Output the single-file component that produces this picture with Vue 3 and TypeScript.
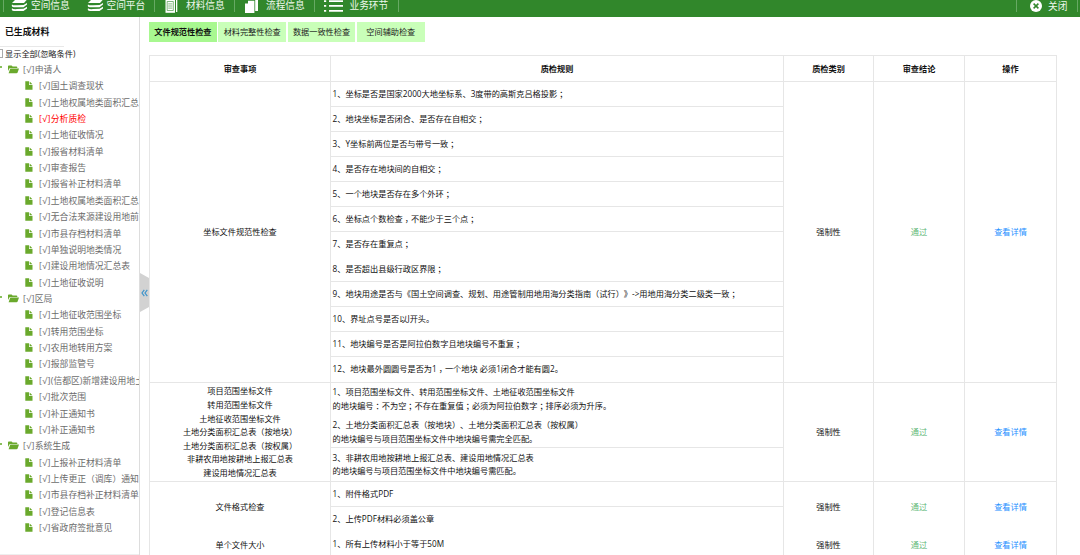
<script setup lang="ts">
interface NavItem { label: string; icon: 'layers' | 'book' | 'pages' | 'list'; width: number; gap: number; divider: boolean }
interface TreeGroup { name: string; items: string[] }
interface Rule { lines: string[]; line: boolean }
interface CheckGroup { names: string[]; rules: Rule[]; height: number; line: boolean }

const nav: NavItem[] = [
  { label: '空间信息', icon: 'layers', width: 75.5, gap: 0, divider: false },
  { label: '空间平台', icon: 'layers', width: 75.5, gap: 0, divider: true },
  { label: '材料信息', icon: 'book', width: 80, gap: 1, divider: true },
  { label: '流程信息', icon: 'pages', width: 80, gap: 1, divider: true },
  { label: '业务环节', icon: 'list', width: 84, gap: 5.5, divider: true },
]

const active = '分析质检'
const tree: TreeGroup[] = [
  {
    name: '申请人',
    items: ['国土调查现状', '土地权属地类面积汇总', '分析质检', '土地征收情况', '报省材料清单', '审查报告', '报省补正材料清单', '土地权属地类面积汇总', '无合法来源建设用地前', '市县存档材料清单', '单独说明地类情况', '建设用地情况汇总表', '土地征收说明'],
  },
  {
    name: '区局',
    items: ['土地征收范围坐标', '转用范围坐标', '农用地转用方案', '报部监管号', '(信都区)新增建设用地土', '批次范围', '补正通知书', '补正通知书'],
  },
  {
    name: '系统生成',
    items: ['上报补正材料清单', '上传更正（调库）通知', '市县存档补正材料清单', '登记信息表', '省政府签批意见'],
  },
]

const tabs: string[] = ['文件规范性检查', '材料完整性检查', '数据一致性检查', '空间辅助检查']
const heads: string[] = ['审查事项', '质检规则', '质检类别', '审查结论', '操作']

const rule = (text: string, line = true): Rule => ({ lines: text.split('|'), line })

// Splits a sentence so that its full-width marks can be centred in their em box.
const parts = (text: string): string[] => text.split(/([；，：])/).filter(Boolean)
const isMark = (text: string): boolean => /^[；，：]$/.test(text)

const groups: CheckGroup[] = [
  {
    names: ['坐标文件规范性检查'],
    height: 301,
    line: true,
    rules: [
      rule('1、坐标是否是国家2000大地坐标系、3度带的高斯克吕格投影；'),
      rule('2、地块坐标是否闭合、是否存在自相交；'),
      rule('3、Y坐标前两位是否与带号一致；'),
      rule('4、是否存在地块间的自相交；'),
      rule('5、一个地块是否存在多个外环；'),
      rule('6、坐标点个数检查，不能少于三个点；'),
      rule('7、是否存在重复点；', false),
      rule('8、是否超出县级行政区界限；'),
      rule('9、地块用途是否与《国土空间调查、规划、用途管制用地用海分类指南（试行）》->用地用海分类二级类一致；'),
      rule('10、界址点号是否以J开头。'),
      rule('11、地块编号是否是阿拉伯数字且地块编号不重复；'),
      rule('12、地块最外圆圆号是否为1，一个地块 必须1闭合才能有圆2。', false),
    ],
  },
  {
    names: ['项目范围坐标文件', '转用范围坐标文件', '土地征收范围坐标文件', '土地分类面积汇总表（按地块）', '土地分类面积汇总表（按权属）', '非耕农用地按耕地上报汇总表', '建设用地情况汇总表'],
    height: 99,
    line: true,
    rules: [
      rule('1、项目范围坐标文件、转用范围坐标文件、土地征收范围坐标文件|的地块编号：不为空；不存在重复值；必须为阿拉伯数字；排序必须为升序。', false),
      rule('2、土地分类面积汇总表（按地块）、土地分类面积汇总表（按权属）|的地块编号与项目范围坐标文件中地块编号需完全匹配。'),
      rule('3、非耕农用地按耕地上报汇总表、建设用地情况汇总表|的地块编号与项目范围坐标文件中地块编号需匹配。', false),
    ],
  },
  {
    names: ['文件格式检查'],
    height: 50,
    line: false,
    rules: [rule('1、附件格式PDF'), rule('2、上传PDF材料必须盖公章', false)],
  },
  {
    names: ['单个文件大小'],
    height: 26,
    line: true,
    rules: [rule('1、所有上传材料小于等于50M', false)],
  },
]
</script>

<template>
  <div class="page">
    <header class="bar">
      <nav class="menu">
        <div v-for="n in nav" :key="n.label" class="entry" :class="[n.icon, { divided: n.divider }]" :style="{ width: n.width + 'px', columnGap: n.gap + 'px' }">
          <svg class="glyph" viewBox="0 0 20 14" width="20" height="14">
            <g v-if="n.icon === 'layers'" fill="#fff">
              <path d="M5 -1H16.5L13 3H1Z" />
              <path d="M1 4.4Q2 5.6 6 5.3L12.5 4.9L16 3V4.6L12.5 7.2H3Q0 6.8 1 4.4Z" />
              <path d="M1 8.2Q2 9.4 6 9.1L12.5 8.7L16 6.8V8.4L12.5 11H3Q0 10.6 1 8.2Z" />
            </g>
            <g v-else-if="n.icon === 'book'">
              <path d="M.5 0H10V12.8H.5Z" fill="#fff" />
              <path d="M11 0H12.3V12H11Z" fill="#fff" />
              <path d="M2.2 1.5H8.3V10.5H2.2ZM3.2 3.9H7.3M3.2 6H7.3M3.2 8.1H7.3" fill="none" stroke="#31872b" stroke-width=".6" />
            </g>
            <g v-else-if="n.icon === 'pages'" fill="#fff">
              <path d="M4 -1H13V11H10.2V0H4Z" />
              <path d="M3 .8H9.4V13H0V3.6H3Z" />
            </g>
            <g v-else fill="#fff">
              <path d="M0 .3H2.2V2.1H0ZM0 5H2.2V6.8H0ZM0 10H2.2V11.8H0ZM5 .3H19V2.1H5ZM5 5H19V6.8H5ZM5 10H19V11.8H5Z" />
            </g>
          </svg>
          <span>{{ n.label }}</span>
        </div>
      </nav>
      <div class="close">
        <svg viewBox="0 0 12 12" width="12" height="12">
          <circle cx="6" cy="6" r="6" fill="#fff" />
          <path d="M3.6 3.6L8.4 8.4M8.4 3.6L3.6 8.4" stroke="#31872b" stroke-width="1.5" />
        </svg>
        <span>关闭</span>
      </div>
    </header>

    <div class="body">
      <aside class="side">
        <h2>已生成材料</h2>
        <div class="rule-line"></div>
        <label class="show-all"><i class="box"></i>显示全部(忽略条件)</label>
        <template v-for="g in tree" :key="g.name">
          <div class="node parent">
            <i class="caret"></i>
            <svg viewBox="0 0 11 9" width="11" height="9" fill="#6aa92c">
              <path d="M0 6V1.2Q0 .4.8.4H3.6L4.6 1.4H8.4Q9.3 1.4 9.3 2.3V3.1H2.2Q1.5 3.1 1.1 3.9Z" />
              <path d="M2.3 3.6H11L9.6 7.6Q9.3 8.2 8.5 8.2H.6Z" />
            </svg>
            <span><b class="tick">[√]</b>{{ g.name }}</span>
          </div>
          <div v-for="(t, i) in g.items" :key="i" class="node" :class="{ active: t === active }">
            <svg viewBox="0 0 8 9" width="8" height="9" fill="#6aa92c">
              <path d="M.3.2H4V4H7.5V8.8H.3Z" />
              <path d="M4.7.4L7.4 3.3H4.7Z" />
            </svg>
            <span><b class="tick">[√]</b>{{ t }}</span>
          </div>
        </template>
      </aside>

      <div class="gutter">
        <div class="handle">
          <svg viewBox="0 0 7 8" width="7" height="8" fill="none" stroke="#3f95cc" stroke-width="1.2">
            <path d="M3.3 .8L1 4L3.3 7.2M6.3 .8L4 4L6.3 7.2" />
          </svg>
        </div>
      </div>

      <main class="main">
        <div class="tabs">
          <div v-for="(t, i) in tabs" :key="t" class="tab" :class="{ on: i === 0 }">{{ t }}</div>
        </div>
        <div class="table">
          <div class="row head">
            <div v-for="h in heads" :key="h" class="cell">{{ h }}</div>
          </div>
          <div v-for="(g, gi) in groups" :key="gi" class="row" :class="{ lined: g.line }" :style="{ height: g.height + 'px' }">
            <div class="cell"><p v-for="n in g.names" :key="n">{{ n }}</p></div>
            <div class="cell rules">
              <div v-for="(r, ri) in g.rules" :key="ri" class="rule" :class="{ under: r.line }">
                <p v-for="l in r.lines" :key="l"><span v-for="(s, si) in parts(l)" :key="si" :class="{ mark: isMark(s) }">{{ s }}</span></p>
              </div>
            </div>
            <div class="cell">强制性</div>
            <div class="cell pass">通过</div>
            <div class="cell link">查看详情</div>
          </div>
        </div>
      </main>
    </div>
  </div>
</template>

<style>
html, body { margin: 0; overflow: hidden; background: #fff; }
</style>

<style scoped>
.page {
  width: 1080px; height: 555px; overflow: hidden; display: flex; flex-direction: column;
  font-family: "Open Sans", "Noto Sans CJK SC", sans-serif; font-size: 8.17px; color: #111;
  white-space: nowrap; text-spacing-trim: space-all;
}
p, h2 { margin: 0; }
.bar {
  height: 17px; flex: none; display: flex; justify-content: space-between; background: #31872b;
  color: #eef8ed; font-size: 9.7px; overflow: hidden;
}
.menu { display: flex; margin-left: 3px; border-left: 1px solid #67a963; height: 12px; }
.entry { display: flex; align-items: flex-start; box-sizing: border-box; height: 12px; padding-left: 7px; }
.entry.book, .entry.pages { padding-left: 10px; }
.entry.list { padding-left: 9px; }
.entry.divided { border-right: 1px solid #67a963; }
.entry span { line-height: 12px; }
.glyph { flex: none; overflow: visible; }
.close {
  display: flex; align-items: center; box-sizing: border-box; width: 62px; height: 12px; margin-right: 2px;
  padding-left: 13px; gap: 6px; border-left: 1px solid #67a963; border-right: 1px solid #67a963;
}
.close svg { flex: none; }
.body { flex: 1; display: flex; min-height: 0; }
.side {
  width: 139px; flex: none; overflow: hidden; color: #6c6c6c; font-size: 8.8px;
  border-bottom: 1px solid #eee; box-sizing: border-box;
}
.side h2 { font-size: 8.9px; font-weight: 700; color: #111; line-height: 16px; padding: 7px 0 0 5px; height: 22px; }
.rule-line { width: 64px; height: 1px; background: #e8e8e8; }
.show-all { display: flex; align-items: center; height: 12px; margin-bottom: 2.3px; color: #222; font-size: 8.2px; }
.box { width: 3px; height: 9px; border: 1px solid #aaa; border-left: 0; box-sizing: border-box; margin-right: 2px; }
.node { height: 16.36px; display: flex; align-items: center; padding-left: 25px; }
.node svg { flex: none; margin-right: 6px; }
.node.parent { padding-left: 0; }
.node.parent svg { margin-right: 4px; }
.tick { font-weight: 400; letter-spacing: .4px; }
.caret { width: 2px; height: 2px; background: #8abf5c; margin: -4px 6px 0 0; }
.active { color: #f00; }
.gutter { width: 9px; flex: none; border-left: 1px solid #ddd; display: flex; }
.handle {
  width: 9px; height: 39px; margin-top: 256px; background: #d2d2d2; display: flex; align-items: center; justify-content: center;
  clip-path: polygon(0 0, 100% 5px, 100% 34px, 0 100%);
}
.main { flex: 1; }
.tabs { display: flex; gap: 1.5px; padding-top: 5px; height: 20px; }
.tab { width: 67.8px; line-height: 20px; text-align: center; background: #c9ffb9; color: #222; }
.tab.on { background: #a8f890; font-weight: 700; color: #111; }
.table { margin-top: 13px; width: 907px; border-top: 1px solid #e6e6e6; border-left: 1px solid #e6e6e6; }
.row { display: grid; grid-template-columns: 181px 453px 90px 91px 92px; box-sizing: border-box; }
.row.head { height: 26px; font-weight: 700; border-bottom: 1px solid #e6e6e6; }
.row.lined { border-bottom: 1px solid #e6e6e6; }
.cell {
  display: flex; flex-direction: column; align-items: center; justify-content: center;
  border-right: 1px solid #e6e6e6; line-height: 13.65px; min-height: 0;
}
.rules { align-items: stretch; justify-content: flex-start; font-size: 8.2px; }
.rule { flex: 1; display: flex; flex-direction: column; justify-content: center; padding-left: 1.6px; box-sizing: border-box; border-bottom: 1px solid transparent; }
.rule.under { border-bottom-color: #e6e6e6; }
.mark { padding-left: 2px; margin-right: -2px; }
.pass { color: #5fb878; }
.link { color: #1e90ff; }
</style>
